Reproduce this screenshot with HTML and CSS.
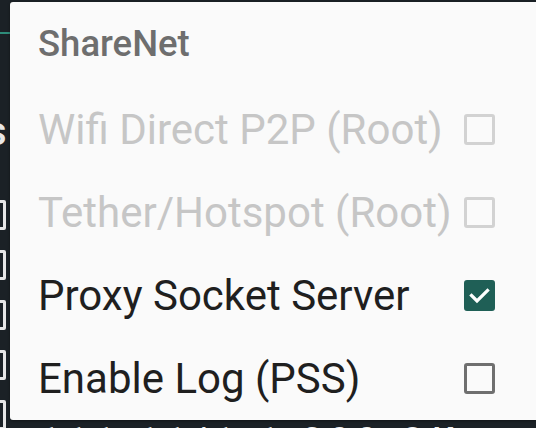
FILE: index.html
```html
<!DOCTYPE html>
<html>
<head>
<meta charset="utf-8">
<link rel="stylesheet" href="styles.css">
</head>
<body>
<div class="backdrop">
  <div class="bg-line"></div>
  <div class="bg-letter">s</div>
  <div class="bg-boxes">
    <span class="bg-box"></span>
    <span class="bg-box"></span>
    <span class="bg-box"></span>
    <span class="bg-box"></span>
    <span class="bg-box"></span>
  </div>
  <div class="bg-log">111 11/1:1 200 OK</div>
</div>
<div class="menu">
  <div class="menu-title">ShareNet</div>
  <div class="menu-item disabled">
    <span class="label">Wifi Direct P2P (Root)</span>
    <span class="check"></span>
  </div>
  <div class="menu-item disabled">
    <span class="label">Tether/Hotspot (Root)</span>
    <span class="check"></span>
  </div>
  <div class="menu-item">
    <span class="label">Proxy Socket Server</span>
    <span class="check checked">
      <svg viewBox="0 0 31 31" width="31" height="31"><path d="M7.5 15.5 L13 21 L23.5 10.5" fill="none" stroke="#ffffff" stroke-width="3.2" stroke-linecap="square"/></svg>
    </span>
  </div>
  <div class="menu-item">
    <span class="label">Enable Log (PSS)</span>
    <span class="check"></span>
  </div>
</div>
</body>
</html>
```

FILE: styles.css
```css
html, body {
  margin: 0;
  padding: 0;
}
body {
  width: 536px;
  height: 428px;
  overflow: hidden;
  background: #1b2126;
  font-family: Roboto, "Noto Sans", sans-serif;
  position: relative;
}
.backdrop {
  position: absolute;
  inset: 0;
}
.bg-line {
  position: absolute;
  left: 0;
  top: 32px;
  width: 10px;
  height: 2px;
  background: #2e8c7a;
}
.bg-letter {
  position: absolute;
  left: -14px;
  top: 108px;
  color: #e8e8e8;
  font-size: 40px;
  font-weight: 500;
}
.bg-boxes {
  position: absolute;
  left: -18px;
  top: 200px;
  display: flex;
  flex-direction: column;
  gap: 20px;
}
.bg-box {
  display: block;
  width: 18px;
  height: 24px;
  border: 3px solid #e6e6e6;
  border-radius: 2px;
}
.bg-log {
  position: absolute;
  left: 40px;
  top: 419px;
  color: #f0f0f0;
  font-size: 34px;
  letter-spacing: 8px;
  font-weight: 500;
  white-space: nowrap;
}
.menu {
  position: absolute;
  left: 10px;
  top: 2px;
  width: 526px;
  height: 418px;
  background: #fafafa;
  border-radius: 3px 0 0 3px;
  box-shadow: 0 1px 3px rgba(0,0,0,0.4);
  display: flex;
  flex-direction: column;
  box-sizing: border-box;
  padding: 0 41px 0 28px;
}
.menu-title {
  height: 86px;
  display: flex;
  align-items: center;
  color: #6e6e6e;
  font-size: 36.5px;
  font-weight: 500;
  padding-bottom: 4px;
  box-sizing: border-box;
}
.menu-item {
  height: 83px;
  display: flex;
  align-items: center;
  color: #1f1f1f;
  font-size: 42px;
}
.menu-item.disabled {
  color: #c6c6c6;
}
.label {
  white-space: nowrap;
}
.check {
  margin-left: auto;
  width: 31px;
  height: 31px;
  box-sizing: border-box;
  border: 3px solid #6f6f6f;
  border-radius: 3px;
  flex-shrink: 0;
  display: flex;
  align-items: center;
  justify-content: center;
}
.menu-item.disabled .check {
  border-color: #d2d2d2;
}
.check.checked {
  background: #1f5f56;
  border-color: #1f5f56;
}
.check.checked svg {
  margin: -3px;
  display: block;
}
```
